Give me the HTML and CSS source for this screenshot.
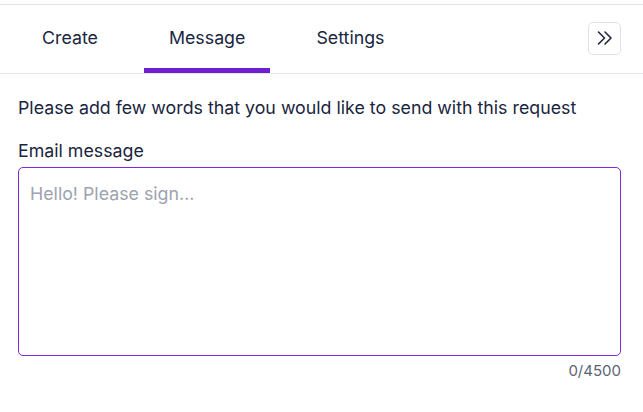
FILE: index.html
```html
<!DOCTYPE html>
<html lang="en">
<head>
<meta charset="utf-8">
<title>Message</title>
<link rel="stylesheet" href="styles.css">
</head>
<body>
<div class="panel">
  <div class="tabbar">
    <nav class="tabs">
      <div class="tab">Create</div>
      <div class="tab active">Message</div>
      <div class="tab">Settings</div>
    </nav>
    <button class="collapse" type="button" aria-label="Collapse">
      <svg width="18" height="18" viewBox="0 0 18 18" fill="none" stroke="#1e293b" stroke-width="1.6" stroke-linecap="round" stroke-linejoin="round">
        <path d="M2.5 3 L8.5 9 L2.5 15"/>
        <path d="M9 3 L15 9 L9 15"/>
      </svg>
    </button>
  </div>
  <div class="content">
    <p class="intro">Please add few words that you would like to send with this request</p>
    <label class="label" for="msg">Email message</label>
    <textarea id="msg" class="message" placeholder="Hello! Please sign..." autofocus></textarea>
    <div class="counter">0/4500</div>
  </div>
</div>
</body>
</html>
```

FILE: styles.css
```css
html, body {
  margin: 0;
  padding: 0;
  background: #ffffff;
}
body {
  font-family: Inter, "Noto Sans", sans-serif;
  color: #1a2540;
}
.panel {
  margin-top: 4px;
  border-top: 1px solid #e2e5f0;
}
.tabbar {
  display: flex;
  align-items: center;
  justify-content: space-between;
  height: 68px;
  border-bottom: 1px solid #e2e5f0;
  padding: 0 22px 0 17px;
}
.tabs {
  display: flex;
  align-self: stretch;
  gap: 21px;
}
.tab {
  display: flex;
  align-items: center;
  padding: 2px 25px 0 25px;
  font-size: 17.8px;
  color: #1a2540;
  border-bottom: 5px solid transparent;
}
.tab.active {
  border-bottom-color: #6d1fd0;
}
.collapse {
  width: 33px;
  height: 33px;
  padding: 0;
  display: flex;
  align-items: center;
  justify-content: center;
  background: #ffffff;
  border: 1px solid #dfe3ec;
  border-radius: 5px;
  margin-top: -2px;
}
.content {
  padding: 0 22px 0 18px;
  display: flex;
  flex-direction: column;
}
.intro {
  margin: 22px 0 0 0;
  font-size: 17.8px;
  line-height: 24px;
}
.label {
  margin-top: 19px;
  font-size: 17.8px;
  line-height: 24px;
}
.message {
  margin-top: 4px;
  height: 189px;
  box-sizing: border-box;
  border: 1.5px solid #7a2bd6;
  border-radius: 5px;
  padding: 15px 11px;
  font-family: Inter, "Noto Sans", sans-serif;
  font-size: 17.8px;
  color: #1a2540;
  caret-color: #1a2540;
  resize: none;
  outline: none;
}
.message::placeholder {
  color: #9ca3af;
}
.counter {
  align-self: flex-end;
  margin-top: 5px;
  font-size: 15px;
  color: #5b6473;
}
```
